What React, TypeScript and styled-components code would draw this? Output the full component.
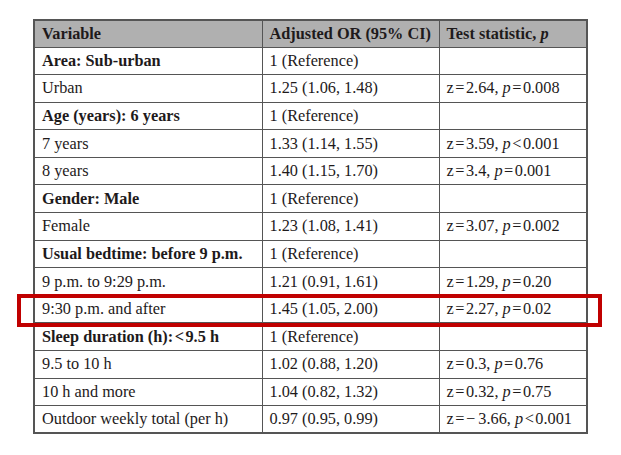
import React from 'react';
import styled, { createGlobalStyle } from 'styled-components';

const GlobalStyle = createGlobalStyle`
  body {
    margin: 0;
    background: #ffffff;
    font-family: "Liberation Serif", "Times New Roman", serif;
    color: #1e1a1b;
  }
`;

const Page = styled.div`
  width: 621px;
  height: 455px;
  padding: 19px 0 0 33px;
  box-sizing: border-box;
  position: relative;
`;

const Table = styled.table`
  border-collapse: collapse;
  table-layout: fixed;
  width: 553px;
  font-size: 16.3px;
  border: 2px solid #555;
`;

const HeadCell = styled.th<{ $w: number }>`
  width: ${(p) => p.$w}px;
  height: 27px;
  background: #b0b0b0;
  border: 1px solid #555;
  text-align: left;
  font-weight: bold;
  padding: 0 7px;
  box-sizing: border-box;
  white-space: nowrap;
`;

const Cell = styled.td<{ $bold?: boolean }>`
  height: 27.6px;
  border: 1px solid #555;
  padding: 0 7px;
  box-sizing: border-box;
  font-weight: ${(p) => (p.$bold ? 'bold' : 'normal')};
  white-space: nowrap;
`;

const Op = styled.span`
  margin: 0 1.5px;
`;

const Highlight = styled.div`
  position: absolute;
  left: 17px;
  top: 294px;
  width: 585px;
  height: 33px;
  border: 4px solid #c00000;
  box-sizing: border-box;
  pointer-events: none;
`;

type Row = { label: React.ReactNode; or: string; stat?: React.ReactNode; bold?: boolean };

const Stat = ({ z, rel, p }: { z: string; rel: string; p: string }) => (
  <>
    z<Op>=</Op>
    {z}, <i>p</i>
    <Op>{rel}</Op>
    {p}
  </>
);

const rows: Row[] = [
  { label: 'Area: Sub-urban', or: '1 (Reference)', bold: true },
  { label: 'Urban', or: '1.25 (1.06, 1.48)', stat: <Stat z="2.64" rel="=" p="0.008" /> },
  { label: 'Age (years): 6 years', or: '1 (Reference)', bold: true },
  { label: '7 years', or: '1.33 (1.14, 1.55)', stat: <Stat z="3.59" rel="<" p="0.001" /> },
  { label: '8 years', or: '1.40 (1.15, 1.70)', stat: <Stat z="3.4" rel="=" p="0.001" /> },
  { label: 'Gender: Male', or: '1 (Reference)', bold: true },
  { label: 'Female', or: '1.23 (1.08, 1.41)', stat: <Stat z="3.07" rel="=" p="0.002" /> },
  { label: 'Usual bedtime: before 9 p.m.', or: '1 (Reference)', bold: true },
  { label: '9 p.m. to 9:29 p.m.', or: '1.21 (0.91, 1.61)', stat: <Stat z="1.29" rel="=" p="0.20" /> },
  { label: '9:30 p.m. and after', or: '1.45 (1.05, 2.00)', stat: <Stat z="2.27" rel="=" p="0.02" /> },
  {
    label: (
      <>
        Sleep duration (h):<Op>&lt;</Op>9.5 h
      </>
    ),
    or: '1 (Reference)',
    bold: true,
  },
  { label: '9.5 to 10 h', or: '1.02 (0.88, 1.20)', stat: <Stat z="0.3" rel="=" p="0.76" /> },
  { label: '10 h and more', or: '1.04 (0.82, 1.32)', stat: <Stat z="0.32" rel="=" p="0.75" /> },
  {
    label: 'Outdoor weekly total (per h)',
    or: '0.97 (0.95, 0.99)',
    stat: <Stat z={'\u2212\u20093.66'} rel="<" p="0.001" />,
  },
];

const App: React.FC = () => (
  <Page>
    <GlobalStyle />
    <Table>
      <thead>
        <tr>
          <HeadCell $w={228}>Variable</HeadCell>
          <HeadCell $w={177}>Adjusted OR (95% CI)</HeadCell>
          <HeadCell $w={148}>
            Test statistic, <i>p</i>
          </HeadCell>
        </tr>
      </thead>
      <tbody>
        {rows.map((r, i) => (
          <tr key={i}>
            <Cell $bold={r.bold}>{r.label}</Cell>
            <Cell>{r.or}</Cell>
            <Cell>{r.stat}</Cell>
          </tr>
        ))}
      </tbody>
    </Table>
    <Highlight />
  </Page>
);

export default App;
